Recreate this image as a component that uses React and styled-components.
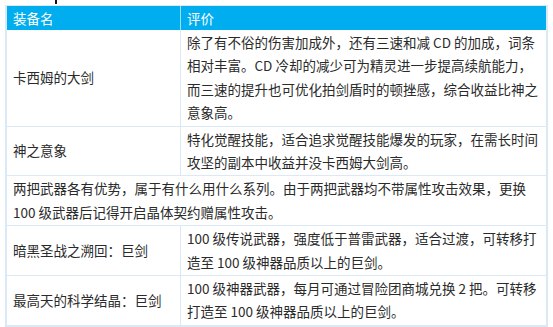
import styled, { createGlobalStyle } from 'styled-components'

const GlobalStyle = createGlobalStyle`
    body {
        margin: 0;
        background: #fff;
        font-family: "Noto Sans CJK SC", "Noto Sans", sans-serif;
    }
`

const rows = [
    {
        name: '卡西姆的大剑',
        lines: [
            '除了有不俗的伤害加成外，还有三速和减 CD 的加成，词条',
            '相对丰富。CD 冷却的减少可为精灵进一步提高续航能力，',
            '而三速的提升也可优化拍剑盾时的顿挫感，综合收益比神之',
            '意象高。',
        ],
    },
    {
        name: '神之意象',
        lines: [
            '特化觉醒技能，适合追求觉醒技能爆发的玩家，在需长时间',
            '攻坚的副本中收益并没卡西姆大剑高。',
        ],
    },
    {
        span: true,
        lines: [
            '两把武器各有优势，属于有什么用什么系列。由于两把武器均不带属性攻击效果，更换',
            '100 级武器后记得开启晶体契约赠属性攻击。',
        ],
    },
    {
        name: '暗黑圣战之溯回：巨剑',
        lines: [
            '100 级传说武器，强度低于普雷武器，适合过渡，可转移打',
            '造至 100 级神器品质以上的巨剑。',
        ],
    },
    {
        name: '最高天的科学结晶：巨剑',
        lines: [
            '100 级神器武器，每月可通过冒险团商城兑换 2 把。可转移',
            '打造至 100 级神器品质以上的巨剑。',
        ],
    },
]

function App() {
    return (
        <Page>
            <GlobalStyle />
            <TopStrip>
                <Caret />
            </TopStrip>
            <Table>
                <colgroup>
                    <col style={{ width: 174 }} />
                    <col />
                </colgroup>
                <thead>
                    <tr>
                        <HeadCell>装备名</HeadCell>
                        <HeadCell last>评价</HeadCell>
                    </tr>
                </thead>
                <tbody>
                    {rows.map((row, i) => (
                        <tr key={i}>
                            {row.span ? (
                                <Cell colSpan={2} last lastRow={i === rows.length - 1}>
                                    {row.lines.map((l, j) => <Line key={j}>{l}</Line>)}
                                </Cell>
                            ) : (
                                <>
                                    <Cell lastRow={i === rows.length - 1}>
                                        <Line>{row.name}</Line>
                                    </Cell>
                                    <Cell last lastRow={i === rows.length - 1}>
                                        {row.lines.map((l, j) => <Line key={j}>{l}</Line>)}
                                    </Cell>
                                </>
                            )}
                        </tr>
                    ))}
                </tbody>
            </Table>
        </Page>
    )
}

const Page = styled.div`
    width: 553px;
    height: 327px;
    padding-left: 5px;
    box-sizing: border-box;
`

const TopStrip = styled.div`
    height: 5px;
    display: flex;
`

const Caret = styled.span`
    display: block;
    width: 2px;
    height: 4px;
    margin-left: 50px;
    background: #111;
`

const Table = styled.table`
    width: 543px;
    border-collapse: separate;
    border-spacing: 0;
    table-layout: fixed;
    border: 2px solid #dbe8f6;
    border-top: 1px solid #dbe8f6;
    font-size: 13.5px;
    color: #2a2a2a;
`

const HeadCell = styled.th`
    background: #00aeef;
    color: #fff;
    font-weight: normal;
    text-align: left;
    height: 24px;
    padding: 0 6px;
    line-height: 24px;
    border-right: ${p => (p.last ? 'none' : '1px solid #9fdcf5')};
`

const Cell = styled.td`
    padding: 1px 6px 1px 6px;
    vertical-align: middle;
    line-height: 23.4px;
    border-right: ${p => (p.last ? 'none' : '1px solid #dbe8f6')};
    border-bottom: ${p => (p.lastRow ? 'none' : '1px solid #dbe8f6')};
`

const Line = styled.div`
    white-space: nowrap;
`

export default App
